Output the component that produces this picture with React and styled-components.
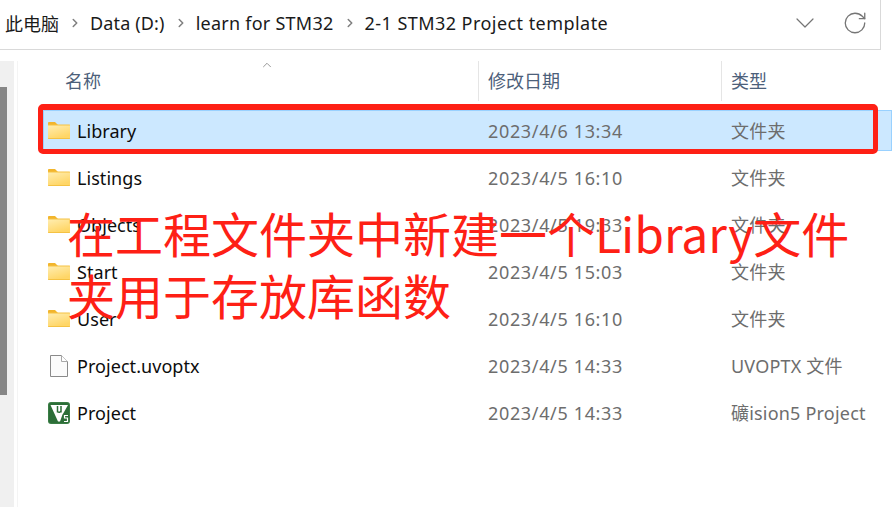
import React from 'react';
import styled, { createGlobalStyle } from 'styled-components';
import { ChevronRight, ChevronDown, ChevronUp, RotateCw } from 'lucide-react';

const GlobalStyle = createGlobalStyle`
    html, body {
        margin: 0;
        padding: 0;
        background: #fff;
    }
    body {
        font-family: "Noto Sans", "Noto Sans CJK SC", sans-serif;
    }
`

const Window = styled.div`
    position: relative;
    width: 892px;
    height: 507px;
    overflow: hidden;
    background: #fff;
`

const AddressBar = styled.div`
    box-sizing: border-box;
    width: 881px;
    height: 50px;
    padding: 0 12px 4px 5px;
    display: flex;
    align-items: center;
    border-right: 1px solid #d9d9d9;
    border-bottom: 1px solid #d9d9d9;
`

const Crumb = styled.span`
    font-size: 18px;
    letter-spacing: ${p => p.$spacing}px;
    color: #1a1a1a;
    white-space: nowrap;
`

const Separator = styled(ChevronRight)`
    width: 14px;
    height: 14px;
    margin: 1px 8px 0 9px;
    color: #808080;
    stroke-width: 2.6;
    flex: none;
`

const BarActions = styled.div`
    margin-left: auto;
    display: flex;
    align-items: center;
    gap: 21px;
    color: #757575;
`

const Body = styled.div`
    display: flex;
    padding-top: 11px;
`

const Sidebar = styled.div`
    box-sizing: border-box;
    width: 14px;
    height: 446px;
    padding-top: 26px;
    margin-right: 3px;
    background: #f0f0f0;
`

const ScrollThumb = styled.div`
    width: 7px;
    height: 308px;
    background: #868686;
`

const List = styled.div`
    flex: 1;
    min-width: 0;
    border-left: 1px solid #f4f4f4;
`

const HeaderRow = styled.div`
    position: relative;
    display: grid;
    grid-template-columns: 461px 243px 1fr;
    height: 40px;
`

const HeaderCell = styled.div`
    box-sizing: border-box;
    padding-left: ${p => p.$first ? '47px' : '9px'};
    font-size: 18px;
    line-height: 40px;
    color: #4c607a;
    border-right: ${p => p.$last ? 'none' : '1px solid #e5e5e5'};
`

const SortArrow = styled(ChevronUp)`
    position: absolute;
    left: 242px;
    top: -3px;
    width: 14px;
    height: 14px;
    color: #8a8a8a;
    stroke-width: 1.5;
`

const Rows = styled.div`
    padding-top: 9px;
    margin-left: 25px;
`

const Row = styled.div`
    box-sizing: border-box;
    display: grid;
    grid-template-columns: 435px 243px 1fr;
    height: 41px;
    margin-bottom: 6px;
    align-items: center;
    background: ${p => p.$selected ? '#cce8ff' : 'transparent'};
    box-shadow: ${p => p.$selected ? 'inset 0 0 0 1px #99d1ff' : 'none'};
`

const NameCell = styled.div`
    display: flex;
    align-items: center;
    padding-left: 5px;
    gap: 7px;
    font-size: 18px;
    letter-spacing: .05px;
    color: #0d0d0d;
    white-space: nowrap;
`

const IconSlot = styled.span`
    display: flex;
    width: 22px;
    height: 22px;
    flex: none;
`

const DateCell = styled.div`
    padding-left: 10px;
    font-size: 18px;
    letter-spacing: .65px;
    color: #6d6d6d;
    white-space: nowrap;
`

const TypeCell = styled.div`
    padding: 0 0 2px 10px;
    font-size: 18px;
    letter-spacing: .2px;
    color: #6d6d6d;
    white-space: nowrap;
`

const Highlight = styled.div`
    position: absolute;
    left: 38px;
    top: 104px;
    width: 840px;
    height: 50px;
    box-sizing: border-box;
    border: solid #fe2015;
    border-width: 6px 5px 5px;
    border-radius: 5px;
`

const Annotation = styled.div`
    position: absolute;
    left: 67px;
    top: 201px;
    font-family: "Noto Sans CJK SC", "Noto Sans", sans-serif;
    font-size: 48px;
    line-height: 62px;
    color: #fe2015;
    white-space: nowrap;
`

function FolderIcon() {
    return (
        <svg width="22" height="22" viewBox="0 0 22 22">
            <defs>
                <linearGradient id="folderFill" x1="0" y1="0" x2="0.500" y2="1">
                    <stop offset="0" stopColor="#ffedb0" />
                    <stop offset="1" stopColor="#ffd667" />
                </linearGradient>
            </defs>
            <path d="M0 3C0 2.500 .5 2 1 2h6l2.500 2.500V6H0z" fill="#f2b52c" />
            <path d="M0 4.500h21.500c.3 0 .5.200.5.500v13.500c0 .3-.2.500-.5.500H.5c-.3 0-.5-.2-.5-.500z" fill="#f5c243" />
            <path d="M0 5.500h22V18H0z" fill="url(#folderFill)" />
        </svg>
    )
}

function FileIcon() {
    return (
        <svg width="22" height="22" viewBox="0 0 22 22">
            <path d="M2.500 .5h11l6 6v15h-17z" fill="#fbfbfb" stroke="#8a8a8a" />
            <path d="M13.500 .5v6h6" fill="#fff" stroke="#a8a8a8" />
        </svg>
    )
}

function KeilIcon() {
    return (
        <svg width="22" height="22" viewBox="0 0 22 22">
            <rect width="22" height="22" rx="3" fill="#3a7d45" />
            <rect x="1" y="1" width="20" height="20" rx="2" fill="#2c6e38" />
            <path d="M2.500 3h17.500l-4.500 8-1 1.500-2.500 7-2 0z" fill="#fff" />
            <path d="M9.500 4v6.500M9.500 9.500c1.500 1.500 3 .5 3.500-.5M13 4v6.500" fill="none" stroke="#2c6e38" strokeWidth="1.500" />
            <path d="M20 13.500h-3.500v2.500h3v3.500H16" fill="none" stroke="#fff" strokeWidth="1.200" />
        </svg>
    )
}

const crumbs = [
    { label: '此电脑', spacing: 0 },
    { label: 'Data (D:)', spacing: .15 },
    { label: 'learn for STM32', spacing: .25 },
    { label: '2-1 STM32 Project template', spacing: .45 },
]

const files = [
    { name: 'Library', date: '2023/4/6 13:34', type: '文件夹', icon: <FolderIcon />, selected: true },
    { name: 'Listings', date: '2023/4/5 16:10', type: '文件夹', icon: <FolderIcon /> },
    { name: 'Objects', date: '2023/4/5 19:33', type: '文件夹', icon: <FolderIcon /> },
    { name: 'Start', date: '2023/4/5 15:03', type: '文件夹', icon: <FolderIcon /> },
    { name: 'User', date: '2023/4/5 16:10', type: '文件夹', icon: <FolderIcon /> },
    { name: 'Project.uvoptx', date: '2023/4/5 14:33', type: 'UVOPTX 文件', icon: <FileIcon /> },
    { name: 'Project', date: '2023/4/5 14:33', type: '礦ision5 Project', icon: <KeilIcon /> },
]

export default function App() {
    return (
        <Window>
            <GlobalStyle />
            <AddressBar>
                {crumbs.map((crumb, i) => (
                    <React.Fragment key={crumb.label}>
                        {i > 0 && <Separator />}
                        <Crumb $spacing={crumb.spacing}>{crumb.label}</Crumb>
                    </React.Fragment>
                ))}
                <BarActions>
                    <ChevronDown size={32} strokeWidth={.9} />
                    <RotateCw size={26} strokeWidth={1.2} />
                </BarActions>
            </AddressBar>
            <Body>
                <Sidebar>
                    <ScrollThumb />
                </Sidebar>
                <List>
                    <HeaderRow>
                        <HeaderCell $first>名称</HeaderCell>
                        <HeaderCell>修改日期</HeaderCell>
                        <HeaderCell $last>类型</HeaderCell>
                        <SortArrow />
                    </HeaderRow>
                    <Rows>
                        {files.map(file => (
                            <Row key={file.name + file.type} $selected={file.selected}>
                                <NameCell>
                                    <IconSlot>{file.icon}</IconSlot>
                                    {file.name}
                                </NameCell>
                                <DateCell>{file.date}</DateCell>
                                <TypeCell>{file.type}</TypeCell>
                            </Row>
                        ))}
                    </Rows>
                </List>
            </Body>
            <Highlight />
            <Annotation>在工程文件夹中新建一个Library文件<br />夹用于存放库函数</Annotation>
        </Window>
    );
}
